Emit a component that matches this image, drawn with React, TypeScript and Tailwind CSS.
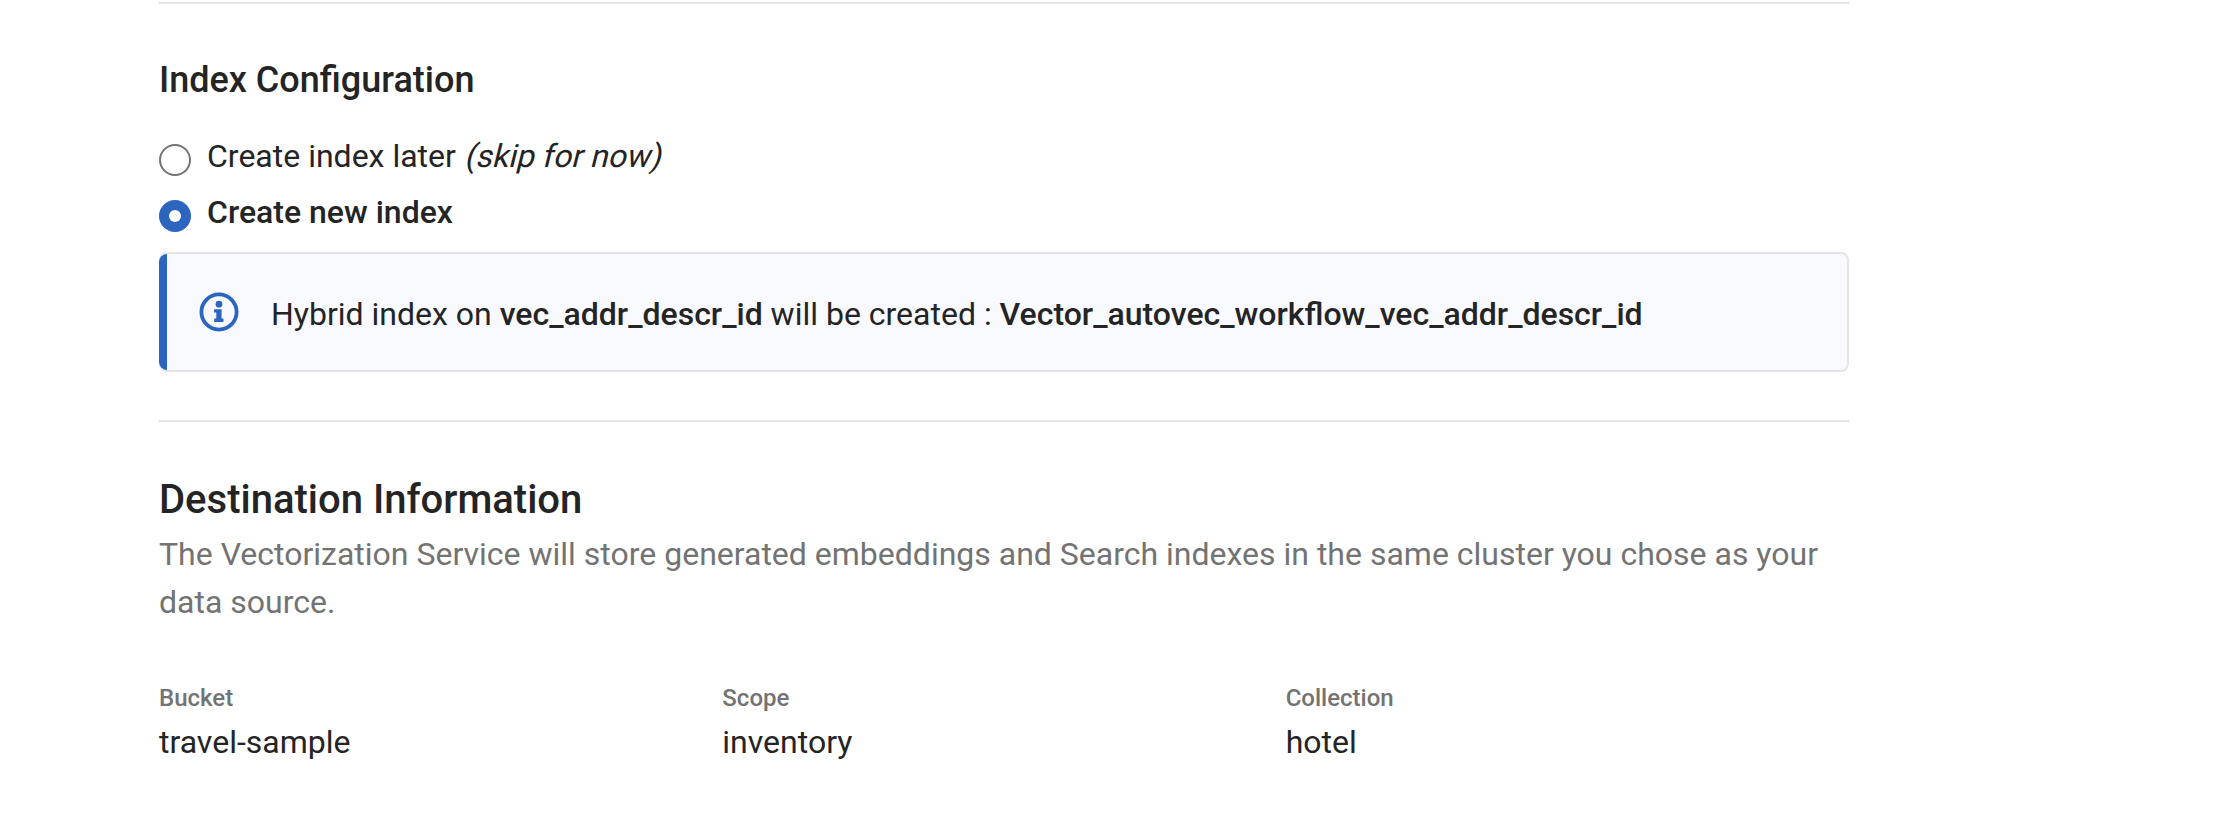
export default function App() {
  return (
    <main className="h-[840px] w-full bg-white pt-0.5 pl-[159px] font-[Roboto,sans-serif] text-[32px] leading-[48px] text-[#242424]">
      <div className="w-[1690px]">
        <section className="border-t-2 border-[#e4e4e4] pt-[52px]">
          <h2 className="text-[36px] leading-[48px] font-medium">Index Configuration</h2>
          <div className="mt-7 flex h-12 items-center gap-4">
            <span className="mt-2 size-8 rounded-full border-2 border-[#737373]" />
            <span>
              Create index later{" "}
              <em className="inline-block origin-[0_35px] -skew-x-14 not-italic">(skip for now)</em>
            </span>
          </div>
          <div className="mt-2 flex h-12 items-center gap-4">
            <span className="mt-2 flex size-8 items-center justify-center rounded-full bg-[#2b65bf]">
              <span className="size-3 rounded-full bg-white" />
            </span>
            <span className="font-medium">Create new index</span>
          </div>
          <div className="mt-4 flex h-[120px] rounded-lg border-y-2 border-r-2 border-[#e4e4e4] bg-[#f9faff]">
            <div className="w-2 rounded-l-lg bg-[#2b65bf]" />
            <svg className="mt-[38px] ml-8 size-10" viewBox="0 0 40 40" fill="#2b65bf">
              <circle cx="20" cy="20" r="17.6" fill="none" stroke="#2b65bf" strokeWidth="3.8" />
              <circle cx="20" cy="12.2" r="3.4" />
              <path d="M15.6 17.2h7v9.4h1.3q.6 0 .6.6v2.2q0 .6-.6.6h-8.1q-.6 0-.6-.6v-2.2q0-.6.6-.6h1.5v-6h-1.7q-.6 0-.6-.6v-2.2q0-.6.6-.6z" />
            </svg>
            <p className="mt-9 ml-8">
              Hybrid index on <b className="font-medium">vec_addr_descr_id</b> will be created :{" "}
              <b className="font-medium">Vector_autovec_workflow_vec_addr_descr_id</b>
            </p>
          </div>
        </section>
        <section className="mt-12 border-t-2 border-[#e4e4e4] pt-[54px]">
          <h1 className="text-[40px] leading-[48px] font-medium">Destination Information</h1>
          <p className="mt-1.5 text-[#737373]">
            The Vectorization Service will store generated embeddings and Search indexes in the same cluster you chose as your data source.
          </p>
          <dl className="mt-[54px] grid grid-cols-3">
            {[["Bucket", "travel-sample"], ["Scope", "inventory"], ["Collection", "hotel"]].map(([label, value]) => (
              <div key={label}>
                <dt className="text-[24px] leading-9 font-medium text-[#737373]">{label}</dt>
                <dd className="mt-0.5">{value}</dd>
              </div>
            ))}
          </dl>
        </section>
      </div>
    </main>
  );
}
